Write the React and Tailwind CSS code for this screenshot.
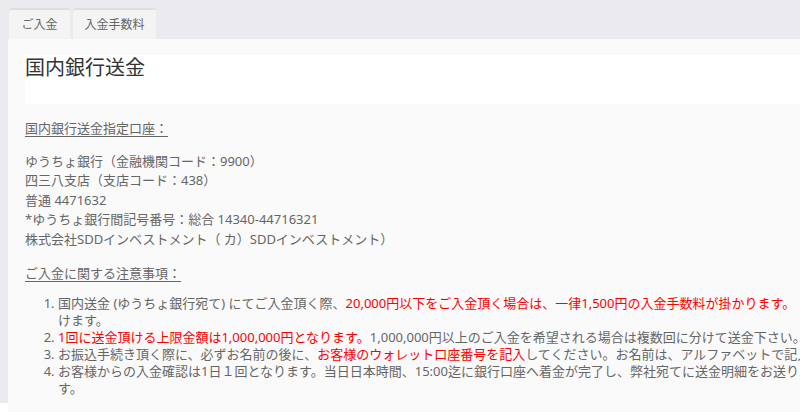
import React from 'react';

const Red = ({ children }) => <span className="text-[#ff0000]">{children}</span>;

const App = () => {
  return (
    <div className="w-[800px] h-[412px] overflow-hidden bg-white font-['Noto_Sans','Noto_Sans_CJK_JP',sans-serif]">
      <div className="h-[403px] bg-[#ebebef] pt-2 pl-2">
        {/* Tabs */}
        <div className="flex gap-[3px] pl-px">
          <div className="w-[61px] h-[31px] flex items-center justify-center rounded-t-[3px] bg-[#f4f4f4] border-t-2 border-[#dedee2] text-[12px] text-[#666]">
            ご入金
          </div>
          <div className="w-[83px] h-[31px] flex items-center justify-center rounded-t-[3px] bg-[#f4f4f4] border-t-2 border-[#dedee2] text-[12px] text-[#666]">
            入金手数料
          </div>
        </div>

        {/* Card */}
        <div className="w-[1200px] h-full bg-[#fafafa] rounded-tl-[3px] pt-4 px-[17px]">
          <div className="h-[49px] bg-white text-[20px] leading-[25px] text-[#333]">国内銀行送金</div>

          <div className="text-[13px] leading-[19.5px] text-[#666]">
            <p className="mt-[15px] underline underline-offset-[3px]">国内銀行送金指定口座：</p>
            <div className="mt-[13px]">
              <p>ゆうちょ銀行（金融機関コード：9900）</p>
              <p>四三八支店（支店コード：438）</p>
              <p>普通 4471632</p>
              <p>*ゆうちょ銀行間記号番号：総合 14340-44716321</p>
              <p>株式会社SDDインベストメント（ カ）SDDインベストメント）</p>
            </div>

            <p className="mt-[15px] underline underline-offset-[3px]">ご入金に関する注意事項：</p>

            <ol className="mt-[11px] list-decimal pl-[33px] leading-[17px]">
              <li>
                国内送金 (ゆうちょ銀行宛て) にてご入金頂く際、
                <Red>20,000円以下をご入金頂く場合は、一律1,500円の入金手数料が掛かります。</Red>
                <br />
                けます。
              </li>
              <li>
                <Red>1回に送金頂ける上限金額は1,000,000円となります。</Red>
                1,000,000円以上のご入金を希望される場合は複数回に分けて送金下さい。
              </li>
              <li>
                お振込手続き頂く際に、必ずお名前の後に、
                <Red>お客様のウォレット口座番号を記入</Red>
                してください。お名前は、アルファベットで記入してください。
              </li>
              <li>
                お客様からの入金確認は1日１回となります。当日日本時間、15:00迄に銀行口座へ着金が完了し、弊社宛てに送金明細をお送りいただいた場合は当日中に反映されま
                <br />
                す。
              </li>
            </ol>
          </div>
        </div>
      </div>
    </div>
  );
};

export default App;
